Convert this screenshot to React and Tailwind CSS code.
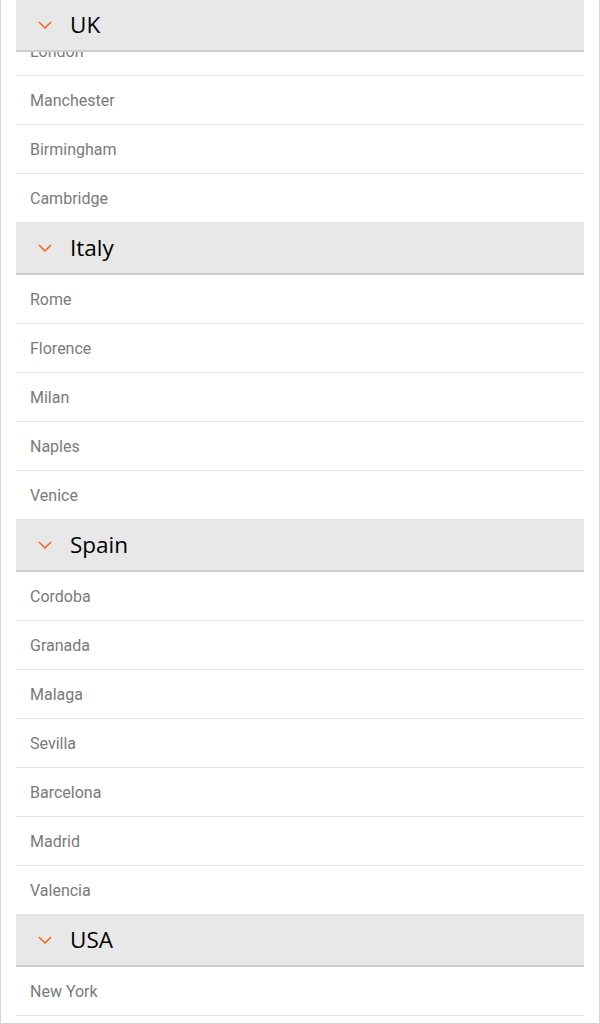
import React, { useEffect, useRef } from "react";

const groups = [
  { name: "UK", cities: ["London", "Manchester", "Birmingham", "Cambridge"] },
  { name: "Italy", cities: ["Rome", "Florence", "Milan", "Naples", "Venice"] },
  {
    name: "Spain",
    cities: ["Cordoba", "Granada", "Malaga", "Sevilla", "Barcelona", "Madrid", "Valencia"],
  },
  { name: "USA", cities: ["New York"] },
];

function Chevron() {
  return (
    <svg width="14" height="8" viewBox="0 0 14 8" className="shrink-0">
      <path d="M1 1 L7 7 L13 1" fill="none" stroke="#f26b21" strokeWidth="1.6" />
    </svg>
  );
}

export default function App() {
  const scroller = useRef(null);

  useEffect(() => {
    if (scroller.current) scroller.current.scrollTop = 25;
  }, []);

  return (
    <div className="w-[600px] h-[1024px] bg-white border-x border-b border-[#d4d4d4] flex flex-col">
      <div ref={scroller} className="flex-1 overflow-hidden px-[15px] pb-[60px]">
        {groups.map((g) => (
          <section key={g.name}>
            <div className="sticky top-0 z-10 h-[52px] bg-[#e8e8e8] border-b-2 border-[#cdcdcd] flex items-center pl-[22px] gap-[18px]">
              <Chevron />
              <span
                className="text-[22.5px] text-black leading-none"
                style={{ fontFamily: '"Open Sans", "Noto Sans", sans-serif' }}
              >
                {g.name}
              </span>
            </div>
            {g.cities.map((c) => (
              <div
                key={c}
                className="h-[49px] border-b border-[#e3e3e3] flex items-center pl-[14px] pt-[1px] text-[16px] text-[#7a7a7a]"
                style={{ fontFamily: "Roboto, sans-serif" }}
              >
                {c}
              </div>
            ))}
          </section>
        ))}
      </div>
    </div>
  );
}
